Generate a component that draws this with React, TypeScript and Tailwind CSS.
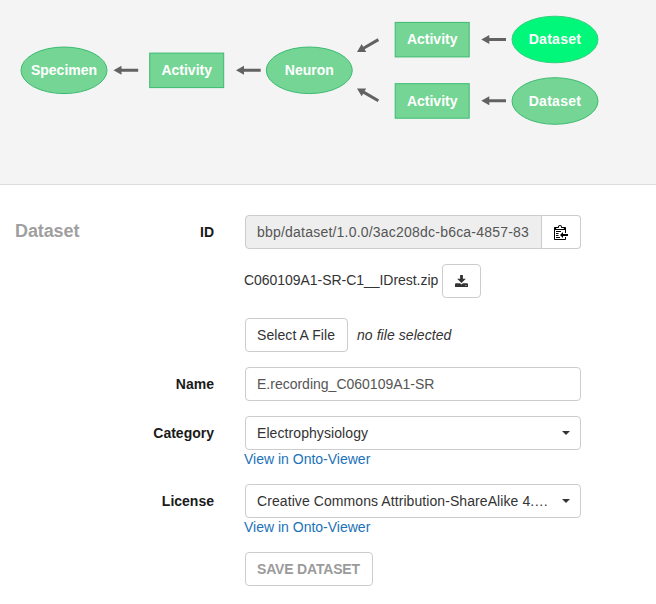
import type { ReactNode } from 'react';

type NodeProps = { x: number; y: number; label: string; spacing: string; active?: boolean };

function Label({ x, y, label, spacing }: NodeProps) {
  return (
    <text x={x} y={y + 4.6} textAnchor="middle" className={`fill-white text-[14px] font-bold ${spacing}`}>
      {label}
    </text>
  );
}

function Entity(props: NodeProps) {
  return (
    <g>
      <ellipse
        cx={props.x}
        cy={props.y}
        rx={43}
        ry={23.3}
        className={props.active ? 'fill-[#00f77a] stroke-[#35d07c]' : 'fill-[#75d595] stroke-[#3bbb70]'}
      />
      <Label {...props} />
    </g>
  );
}

function Activity(props: NodeProps) {
  return (
    <g>
      <rect x={props.x - 37} y={props.y - 17.2} width={74} height={34.5} className="fill-[#75d595] stroke-[#3bbb70]" />
      <Label {...props} />
    </g>
  );
}

function Arrow({ x, y, angle = 0 }: { x: number; y: number; angle?: number }) {
  return (
    <path
      d="M0 0 8 -4.5V-1.5H24.7V1.5H8V4.5Z"
      transform={`translate(${x} ${y}) rotate(${angle})`}
      className="fill-[#626262]"
    />
  );
}

function Graph() {
  return (
    <svg width="656" height="184" className="block">
      <Arrow x={113.5} y={70.3} />
      <Arrow x={236} y={70.3} />
      <Arrow x={357} y={52} angle={-30} />
      <Arrow x={357} y={88.4} angle={30} />
      <Arrow x={481.3} y={39.5} />
      <Arrow x={481.3} y={100.8} />
      <Entity x={64} y={70.3} label="Specimen" spacing="tracking-normal" />
      <Activity x={186.7} y={70.3} label="Activity" spacing="tracking-normal" />
      <Entity x={309.3} y={70.3} label="Neuron" spacing="tracking-normal" />
      <Activity x={432.2} y={39.6} label="Activity" spacing="tracking-normal" />
      <Activity x={432.2} y={100.9} label="Activity" spacing="tracking-normal" />
      <Entity x={555} y={39.5} label="Dataset" spacing="tracking-[0.3px]" active />
      <Entity x={555} y={101} label="Dataset" spacing="tracking-[0.3px]" />
    </svg>
  );
}

function ClippyIcon() {
  return (
    <svg width="14" height="16" viewBox="0 0 14 16" className="fill-black">
      <path
        fillRule="evenodd"
        d="M2 13h4v1H2v-1zm5-6H2v1h5V7zm2 3V8l-3 3 3 3v-2h5v-2H9zM4.500 9H2v1h2.500V9zM2 12h2.500v-1H2v1zm9 1h1v2c-.02.28-.11.52-.3.7-.19.18-.42.28-.7.3H1c-.55 0-1-.45-1-1V4c0-.55.45-1 1-1h3c0-1.110.890-2 2-2 1.110 0 2 .890 2 2h3c.55 0 1 .45 1 1v5h-1V6H1v9h10v-2zM2 5h8c0-.55-.45-1-1-1H8c-.55 0-1-.45-1-1s-.45-1-1-1-1 .45-1 1-.45 1-1 1H3c-.55 0-1 .45-1 1z"
      />
    </svg>
  );
}

function SaveIcon() {
  return (
    <svg width="13" height="12" viewBox="0 0 13 12" className="fill-[#333]">
      <path d="M5.1 0H7.9V3.7H10.900L6.500 8 2.100 3.700H5.100Z" />
      <path d="M.6 8.300H5L6.500 9.600 8 8.300H12.400L13 9.300V12H0V9.300ZM10 10V10.600H11.600V10Z" fillRule="evenodd" />
    </svg>
  );
}

function Row({ label, children, className }: { label?: string; children: ReactNode; className?: string }) {
  return (
    <div className={`flex ${className ?? ''}`}>
      <div className="w-[114px] shrink-0 pt-[7px] pr-[31px] text-right font-bold whitespace-nowrap text-[#1a1a1a]">{label}</div>
      <div className="w-[336px]">{children}</div>
    </div>
  );
}

const box = 'flex h-[34px] items-center rounded border border-[#ccc] bg-white whitespace-nowrap';

function Dropdown({ value, spacing }: { value: string; spacing: string }) {
  return (
    <>
      <button className={`${box} w-full justify-between pr-[10px] pl-[11px]`}>
        <span className={spacing}>{value}</span>
        <svg width="8" height="4" className="fill-[#333]">
          <path d="M0 0H8L4 4Z" />
        </svg>
      </button>
      <a className="-ml-px block h-[18px] leading-[18px] text-[#1b72b8]">View in Onto-Viewer</a>
    </>
  );
}

export default function App() {
  return (
    <div className="h-[604px] w-[656px] overflow-hidden bg-white font-['Liberation_Sans',Arial,sans-serif] text-[14px] leading-5 text-[#333]">
      <header className="h-[185px] border-b border-[#ddd] bg-[#f4f4f4]">
        <Graph />
      </header>
      <main className="flex pt-[30px] pl-[15px]">
        <h2 className="w-[116px] pt-[5px] text-[18px] leading-[22px] font-bold tracking-[-0.1px] text-[#9f9f9f]">Dataset</h2>
        <div>
          <Row label="ID">
            <div className="flex">
              <div className="flex h-[34px] w-[297px] items-center rounded-l border border-[#ccc] bg-[#eee] pl-[11px] whitespace-nowrap text-[#555]">
                <span className="tracking-[0.21px]">bbp/dataset/1.0.0/3ac208dc-b6ca-4857-83</span>
              </div>
              <button className="flex h-[34px] w-[39px] items-center justify-center rounded-r border border-l-0 border-[#ccc]">
                <ClippyIcon />
              </button>
            </div>
          </Row>
          <Row className="mt-[15px]">
            <div className="flex items-center">
              <span className="-ml-px w-[198px] pb-0.5 tracking-[-0.04px] whitespace-nowrap">C060109A1-SR-C1__IDrest.zip</span>
              <button className={`${box} w-[39px] justify-center`}>
                <SaveIcon />
              </button>
            </div>
          </Row>
          <Row className="mt-5">
            <div className="flex items-center gap-[9px]">
              <button className={`${box} w-[103px] pl-[11px]`}>
                <span className="tracking-[0.08px]">Select A File</span>
              </button>
              <em className="tracking-[0.06px]">no file selected</em>
            </div>
          </Row>
          <Row label="Name" className="mt-[15px]">
            <div className={`${box} pl-[11px] text-[#555]`}>E.recording_C060109A1-SR</div>
          </Row>
          <Row label="Category" className="mt-[15px]">
            <Dropdown value="Electrophysiology" spacing="tracking-[0.08px]" />
          </Row>
          <Row label="License" className="mt-4">
            <Dropdown value="Creative Commons Attribution-ShareAlike 4.…" spacing="tracking-[0.08px]" />
          </Row>
          <Row className="mt-4">
            <button className={`${box} w-[128px] pl-[11px] font-bold tracking-[-0.18px] text-[#9b9b9b]`}>SAVE DATASET</button>
          </Row>
        </div>
      </main>
    </div>
  );
}
